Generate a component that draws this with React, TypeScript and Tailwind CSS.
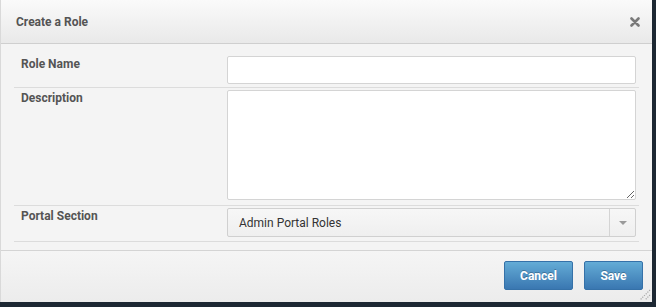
import React from 'react';

const font = { fontFamily: 'Roboto, "Liberation Sans", Arial, sans-serif' };

const Row: React.FC<{ label: string; className?: string; children: React.ReactNode }> = ({ label, className = '', children }) => (
  <div className={`flex border-b border-[#dcdcdc] ${className}`}>
    <div className="w-[213px] pl-[7px] text-[12px] leading-[16px] font-bold text-[#545454]">{label}</div>
    <div className="flex-1">{children}</div>
  </div>
);

const App: React.FC = () => {
  return (
    <div className="w-[656px] h-[307px] bg-[#1d2833] overflow-hidden" style={font}>
      <div className="w-[652px] h-[302px] bg-[#f4f4f4] rounded-tr-[4px] border-l border-[#d9d9d9] flex flex-col relative">
        {/* Header */}
        <div className="h-[44px] shrink-0 flex items-center justify-between pl-[15px] pr-[12px] bg-gradient-to-b from-[#fafafa] to-[#e9e9e9] border-b border-[#cfcfcf]">
          <h2 className="text-[12px] font-bold text-[#545454]">Create a Role</h2>
          <button className="text-[#7a7a7a]">
            <svg width="10" height="10" viewBox="0 0 10 10">
              <path d="M1.5 1.5 L8.5 8.5 M8.5 1.5 L1.5 8.5" stroke="currentColor" strokeWidth="2.6" strokeLinecap="round" />
            </svg>
          </button>
        </div>

        {/* Body */}
        <div className="flex-1 px-[13px]">
          <Row label="Role Name" className="pt-[12px] pb-[3px]">
            <input className="w-[409px] h-[28px] bg-white border border-[#d4d4d4] rounded-[2px] outline-none px-2 text-[12px]" />
          </Row>
          <Row label="Description" className="pt-[2px] pb-[5px]">
            <textarea className="block w-[409px] h-[110px] bg-white border border-[#d4d4d4] rounded-[2px] outline-none px-2 text-[12px]" />
          </Row>
          <Row label="Portal Section" className="pt-[2px] pb-[4px]">
            <div className="w-[409px] h-[29px] flex items-center bg-gradient-to-b from-[#f7f7f7] to-[#efefef] border border-[#d0d0d0] rounded-[2px]">
              <span className="flex-1 pl-[11px] text-[12px] text-[#333]">Admin Portal Roles</span>
              <span className="w-[26px] h-full border-l border-[#d4d4d4] flex items-center justify-center">
                <svg width="8" height="4" viewBox="0 0 8 4">
                  <path d="M0 0 L8 0 L4 4 Z" fill="#9a9a9a" />
                </svg>
              </span>
            </div>
          </Row>
        </div>

        {/* Footer */}
        <div className="h-[52px] shrink-0 border-t border-[#d4d4d4] bg-gradient-to-b from-[#f5f5f5] to-[#ececec] flex items-center justify-end gap-[11px] pr-[9px] pb-[2px]">
          <button className="w-[69px] h-[29px] rounded-[2px] border border-[#3571a8] bg-gradient-to-b from-[#64acd6] to-[#3a77b1] text-white text-[12px] font-bold [text-shadow:0_-1px_0_rgba(0,0,0,0.25)]">
            Cancel
          </button>
          <button className="w-[59px] h-[29px] rounded-[2px] border border-[#3571a8] bg-gradient-to-b from-[#64acd6] to-[#3a77b1] text-white text-[12px] font-bold [text-shadow:0_-1px_0_rgba(0,0,0,0.25)]">
            Save
          </button>
        </div>

        {/* resize grip */}
        <svg className="absolute right-[1px] bottom-[1px]" width="12" height="12" viewBox="0 0 12 12">
          <path d="M11 1 L1 11 M11 6 L6 11" stroke="#a8a8a8" strokeWidth="1.2" strokeDasharray="1.2 1.2" />
        </svg>
      </div>
    </div>
  );
};

export default App;
